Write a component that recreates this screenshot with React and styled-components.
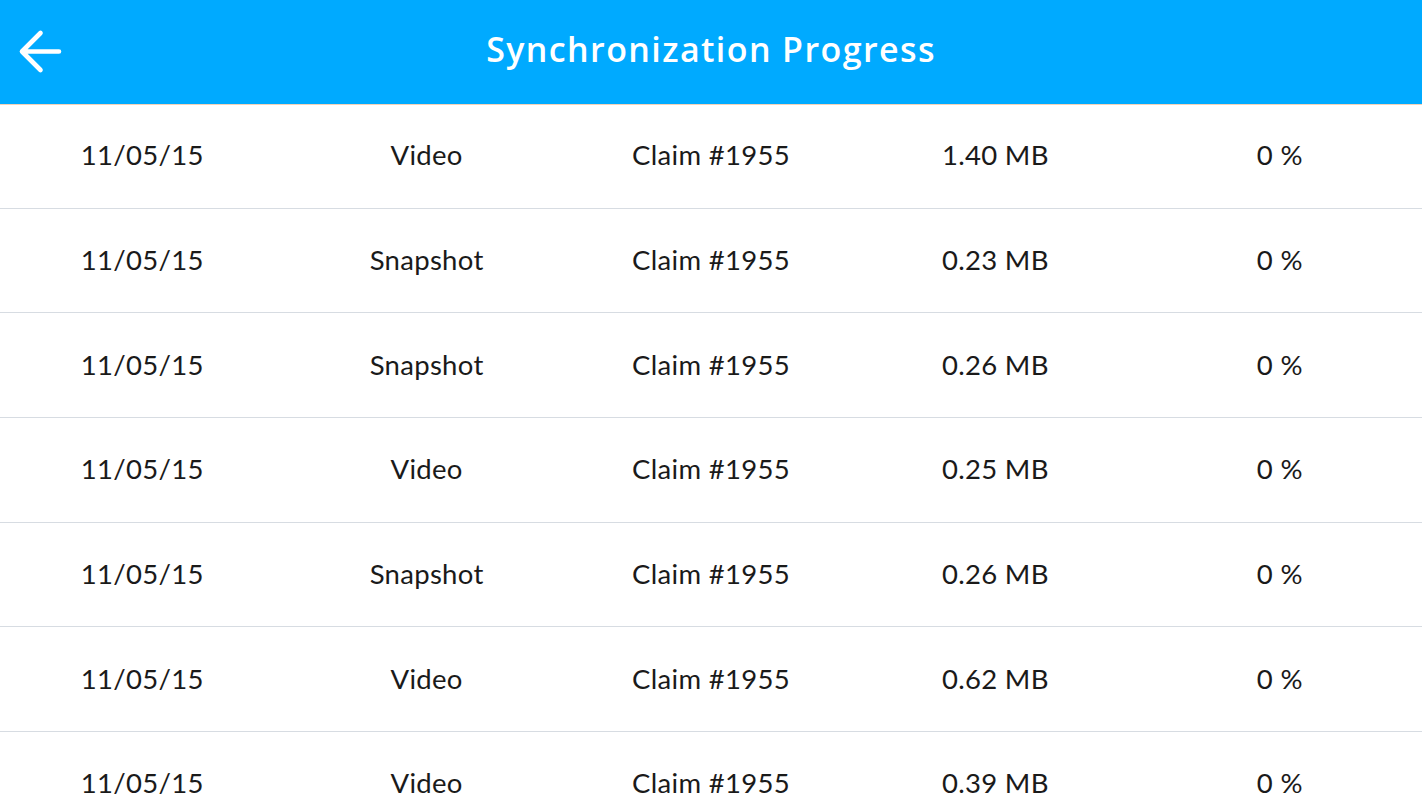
import React from "react";
import styled, { createGlobalStyle } from "styled-components";

const Global = createGlobalStyle`
  html, body { margin: 0; padding: 0; background: #ffffff; }
  body { font-family: Lato, "Noto Sans", sans-serif; overflow: hidden; }
`;

const Page = styled.div`
  width: 1422px;
  height: 800px;
  display: flex;
  flex-direction: column;
  overflow: hidden;
  background: #fff;
`;

const Header = styled.header`
  height: 104px;
  flex: 0 0 104px;
  background: #00aaff;
  display: flex;
  align-items: center;
  justify-content: center;
  position: relative;
  box-shadow: 0 1px 0 #f3d2b8;
  z-index: 1;
`;

const BackButton = styled.button`
  position: absolute;
  left: 16px;
  top: 26px;
  width: 50px;
  height: 52px;
  border: none;
  background: transparent;
  padding: 0;
  display: flex;
  align-items: center;
  justify-content: center;
  cursor: pointer;
`;

const Title = styled.h1`
  margin: 0;
  color: #fff;
  font-family: "Open Sans", Lato, sans-serif;
  font-weight: 600;
  font-size: 34px;
  letter-spacing: 1.4px;
  margin-top: -6px;
`;

const List = styled.div`
  display: flex;
  flex-direction: column;
`;

const Row = styled.div`
  height: 103.7px;
  flex: 0 0 auto;
  display: grid;
  grid-template-columns: repeat(5, 1fr);
  align-items: center;
  border-bottom: 1px solid #d7dce2;
`;

const Cell = styled.div`
  text-align: center;
  font-family: Lato, "Noto Sans", sans-serif;
  font-size: 27.5px;
  color: #1a1a1a;
  letter-spacing: 0.3px;
  margin-top: -2px;
`;

const rows = [
  ["11/05/15", "Video", "Claim #1955", "1.40 MB", "0 %"],
  ["11/05/15", "Snapshot", "Claim #1955", "0.23 MB", "0 %"],
  ["11/05/15", "Snapshot", "Claim #1955", "0.26 MB", "0 %"],
  ["11/05/15", "Video", "Claim #1955", "0.25 MB", "0 %"],
  ["11/05/15", "Snapshot", "Claim #1955", "0.26 MB", "0 %"],
  ["11/05/15", "Video", "Claim #1955", "0.62 MB", "0 %"],
  ["11/05/15", "Video", "Claim #1955", "0.39 MB", "0 %"],
];

export default function App() {
  return (
    <Page>
      <Global />
      <Header>
        <BackButton aria-label="Back">
          <svg width="50" height="52" viewBox="0 0 50 52" fill="none">
            <path
              d="M6 25.5 L24.5 7 M6 25.5 L24.5 44 M6 25.5 H43"
              stroke="#fff"
              strokeWidth="4.6"
              strokeLinecap="round"
              strokeLinejoin="round"
            />
          </svg>
        </BackButton>
        <Title>Synchronization Progress</Title>
      </Header>
      <List>
        {rows.map((r, i) => (
          <Row key={i}>
            {r.map((c, j) => (
              <Cell key={j}>{c}</Cell>
            ))}
          </Row>
        ))}
      </List>
    </Page>
  );
}
